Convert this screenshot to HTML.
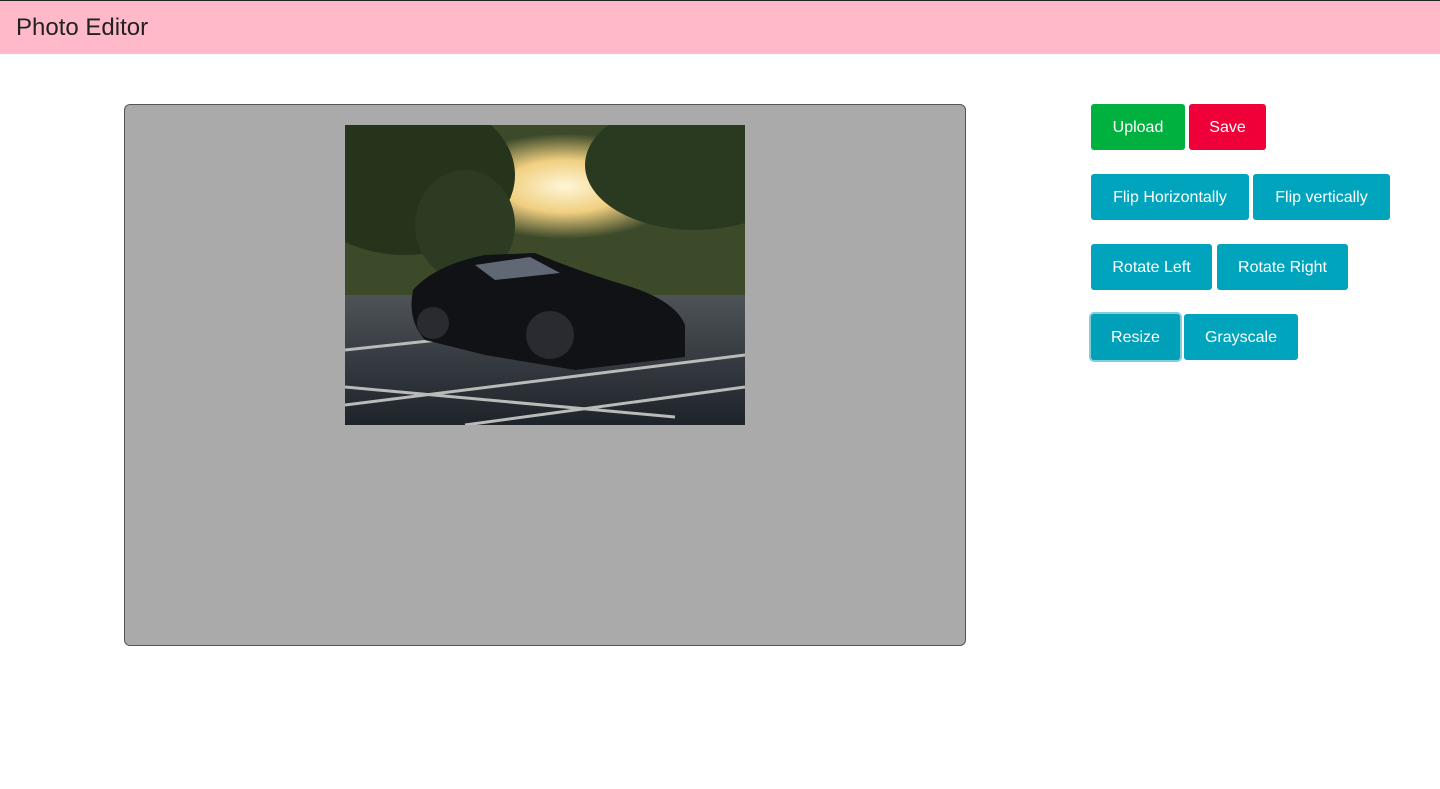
<!DOCTYPE html>
<html><head><style>
*{box-sizing:border-box;margin:0;padding:0}
body{width:1440px;height:789px;background:#fff;font-family:"Liberation Sans",sans-serif;position:relative;overflow:hidden}
.hdr{position:absolute;top:0;left:0;width:1440px;height:54px;background:#ffb9c8;border-top:1px solid #222}
.hdr span{position:absolute;left:16px;top:13px;font-size:24px;color:#222}
.canvas{position:absolute;left:124px;top:104px;width:842px;height:542px;background:#aaa;border:1px solid #555;border-radius:6px}
.img{position:absolute;left:345px;top:125px;width:400px;height:300px;overflow:hidden}
.b{position:absolute;height:46px;border-radius:3px;color:#fff;font-size:16px;line-height:48px;text-align:center;background:#00a5bd}
</style></head><body>
<div class="hdr"><span>Photo Editor</span></div>
<div class="canvas"></div>
<div class="img">
<svg width="400" height="300" viewBox="0 0 400 300">
<defs>
<radialGradient id="sun" cx="0.55" cy="0.35" r="0.3"><stop offset="0" stop-color="#fff6d8"/><stop offset="0.5" stop-color="#f0cf80"/><stop offset="1" stop-color="#3c4a2a"/></radialGradient>
<linearGradient id="grd" x1="0" y1="0" x2="0" y2="1"><stop offset="0" stop-color="#4e5358"/><stop offset="1" stop-color="#1e232a"/></linearGradient>
</defs>
<rect width="400" height="300" fill="#25301d"/>
<rect x="0" y="0" width="400" height="175" fill="url(#sun)"/>
<ellipse cx="60" cy="50" rx="110" ry="80" fill="#26341c"/>
<ellipse cx="350" cy="40" rx="110" ry="65" fill="#2a3a20"/>
<ellipse cx="120" cy="100" rx="50" ry="55" fill="#2d3b22"/>
<rect x="0" y="170" width="400" height="130" fill="url(#grd)"/>
<path d="M0 280 L400 230 M0 225 L280 195 M120 300 L400 262 M0 262 L330 292" stroke="#b9bbb8" stroke-width="3"/>
<path d="M68 165 Q90 140 140 130 L190 128 Q230 145 280 160 Q330 175 340 200 L340 232 L230 245 L140 230 L80 215 Q62 195 68 165Z" fill="#111215"/>
<path d="M130 140 L185 132 L215 148 L150 155Z" fill="#5f6874"/>
<circle cx="88" cy="198" r="16" fill="#2a2b30"/><circle cx="205" cy="210" r="24" fill="#2a2b30"/>
</svg></div>
<div class="b" style="left:1091px;top:104px;width:94px;background:#00b140">Upload</div>
<div class="b" style="left:1189px;top:104px;width:77px;background:#ef0038">Save</div>
<div class="b" style="left:1091px;top:174px;width:158px">Flip Horizontally</div>
<div class="b" style="left:1253px;top:174px;width:137px">Flip vertically</div>
<div class="b" style="left:1091px;top:244px;width:121px">Rotate Left</div>
<div class="b" style="left:1217px;top:244px;width:131px">Rotate Right</div>
<div class="b" style="left:1091px;top:314px;width:89px;box-shadow:0 0 0 2px #7fd0dc;background:#00a0b8">Resize</div>
<div class="b" style="left:1184px;top:314px;width:114px">Grayscale</div>
</body></html>
